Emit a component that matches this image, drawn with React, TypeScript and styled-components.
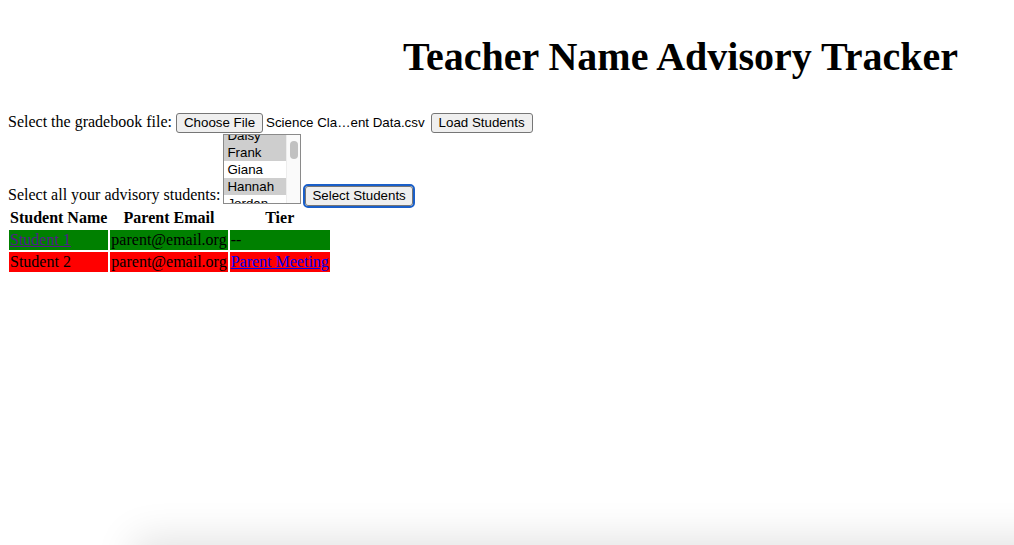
import React from 'react';
import styled, { createGlobalStyle } from 'styled-components';

const GlobalStyle = createGlobalStyle`
  body {
    margin: 8px;
    font-family: "Liberation Serif", "Times New Roman", serif;
    font-size: 16px;
    color: #000;
    background: #fff;
  }
`;

const students = [
  { name: 'Daisy', selected: true },
  { name: 'Frank', selected: true },
  { name: 'Giana', selected: false },
  { name: 'Hannah', selected: true },
  { name: 'Jordan', selected: false },
];

const rows = [
  { name: 'Student 1', email: 'parent@email.org', tier: '--', color: '#008000', link: true, tierLink: false },
  { name: 'Student 2', email: 'parent@email.org', tier: 'Parent Meeting', color: '#ff0000', link: false, tierLink: true },
];

const App = () => {
  return (
    <>
      <GlobalStyle />
      <Title>Teacher Name Advisory Tracker</Title>
      <Line>
        Select the gradebook file: <Button>Choose File</Button>
        <FileName>Science Cla…ent Data.csv</FileName> <Button>Load Students</Button>
      </Line>
      <Line>
        Select all your advisory students:{' '}
        <ListBox>
          <ListFrame>
            <Options>
              {students.map((s) => (
                <Option key={s.name} $selected={s.selected}>{s.name}</Option>
              ))}
            </Options>
            <Track>
              <Thumb />
            </Track>
          </ListFrame>
        </ListBox>{' '}
        <Button $focused>Select Students</Button>
      </Line>
      <Table>
        <thead>
          <tr>
            <th>Student Name</th>
            <th>Parent Email</th>
            <th>Tier</th>
          </tr>
        </thead>
        <tbody>
          {rows.map((r) => (
            <tr key={r.name}>
              <Cell $bg={r.color}>{r.link ? <Visited href="#">{r.name}</Visited> : r.name}</Cell>
              <Cell $bg={r.color}>{r.email}</Cell>
              <Cell $bg={r.color}>{r.tierLink ? <Link href="#">{r.tier}</Link> : r.tier}</Cell>
            </tr>
          ))}
        </tbody>
      </Table>
      <Sheet />
    </>
  );
};

const Title = styled.h1`
  font-size: 40px;
  font-weight: bold;
  text-align: right;
  margin: 26px 0 32px;
  padding-right: 48px;
  line-height: 46px;
`;

const Line = styled.div`
  line-height: 20px;
  white-space: nowrap;
`;

const Button = styled.button<{ $focused?: boolean }>`
  font-family: "Liberation Sans", Arial, sans-serif;
  font-size: 13.33px;
  color: #000;
  background: #efefef;
  border: 1px solid #767676;
  border-radius: 3px;
  padding: 1px 7px;
  height: 20px;
  vertical-align: baseline;
  ${(p) => p.$focused && `outline: 2px solid #1a5fc8; outline-offset: 0; padding: 1px 6px;`}
`;

const FileName = styled.span`
  font-family: "Liberation Sans", Arial, sans-serif;
  font-size: 13.33px;
  margin-left: 3px;
  margin-right: 2px;
`;

const ListBox = styled.div`
  display: inline-block;
  width: 78px;
  height: 70px;
  box-sizing: border-box;
  border: 1px solid #8a8a8a;
  background: #fff;
  overflow: hidden;
  vertical-align: -4px;
  margin-top: 1px;
  margin-left: -1px;
`;

const ListFrame = styled.div`
  display: flex;
  height: 100%;
`;

const Options = styled.div`
  flex: 1;
  margin-top: -8px;
  font-family: "Liberation Sans", Arial, sans-serif;
  font-size: 13.33px;
`;

const Option = styled.div<{ $selected: boolean }>`
  height: 17px;
  line-height: 17px;
  padding-left: 3px;
  background: ${(p) => (p.$selected ? '#cecece' : '#fff')};
`;

const Track = styled.div`
  width: 14px;
  background: #fafafa;
  border-left: 1px solid #ededed;
  padding: 6px 3px 0 3px;
  box-sizing: border-box;
`;

const Thumb = styled.div`
  width: 8px;
  height: 18px;
  border-radius: 4px;
  background: #c1c1c1;
`;

const Table = styled.table`
  border-spacing: 2px;
  margin-left: -1px;
  th {
    padding: 1px;
  }
`;

const Cell = styled.td<{ $bg: string }>`
  background: ${(p) => p.$bg};
  padding: 1px;
`;

const Visited = styled.a`
  color: #551a8b;
`;

const Link = styled.a`
  color: #0000ee;
`;

const Sheet = styled.div`
  position: fixed;
  left: 140px;
  right: -40px;
  top: 545px;
  height: 40px;
  box-shadow: 0 0 40px 6px rgba(0, 0, 0, 0.12);
`;

export default App;
